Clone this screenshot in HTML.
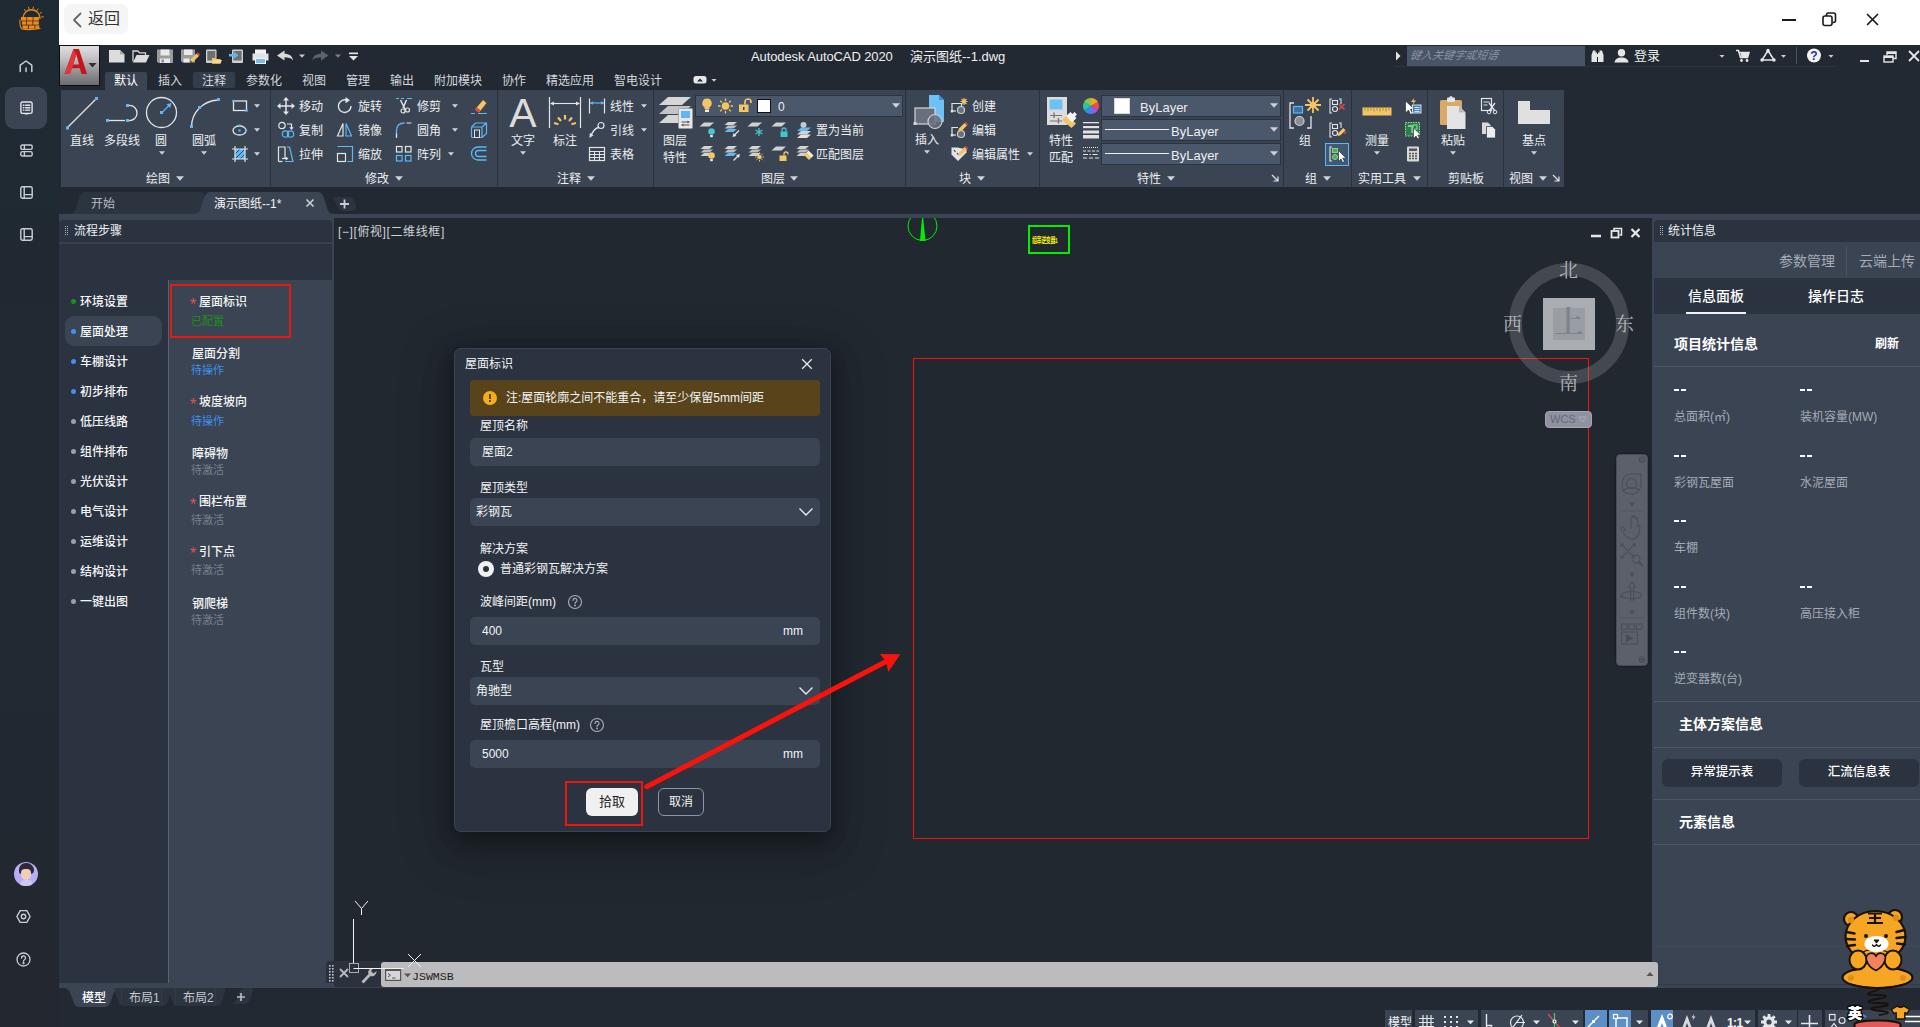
<!DOCTYPE html>
<html lang="zh-CN">
<head>
<meta charset="utf-8">
<title>屋面标识</title>
<style>
*{box-sizing:border-box;margin:0;padding:0}
html,body{width:1920px;height:1027px;overflow:hidden;background:#222933}
body{font-family:"Liberation Sans","Noto Sans CJK SC",sans-serif;font-size:12px;color:#e6e9ee;position:relative}
.a{position:absolute}
.t{position:absolute;white-space:nowrap;line-height:1}
svg{position:absolute;overflow:visible}
.mn{top:75px;font-size:12px;color:#d4d8de}
.rt{font-size:12px;color:#eceef1}
.cb{background:#4b576b;border:1px solid #2c3440}
.fl{font-size:12px;color:#f4f5f7;font-weight:500}
.cmp{font-family:"Liberation Serif","Noto Serif CJK SC",serif}
.dl{font-size:12px;color:#f2f3f5}
.inp{left:470px;width:350px;height:28px;border-radius:5px;background:#3b4453}
.sb{top:1010px;height:17px;background:#3b4453}
/* ---------- main regions ---------- */
#side{left:0;top:0;width:59px;height:1027px;background:linear-gradient(#1f2a33 0%,#212932 40%,#232830 100%)}
#topbar{left:59px;top:0;width:1861px;height:45px;background:#fff}
#acad{left:59px;top:45px;width:1861px;height:982px;background:#222933}
#ribbon{left:61px;top:90px;width:1503px;height:97px;background:#3b4453}
#canvas{left:334px;top:219px;width:1318px;height:768px;background:#212830}
#flow{left:60px;top:220px;width:273px;height:765px;background:#2b3240}
#flowR{left:169px;top:280px;width:164px;height:705px;background:#3b4453;border-left:1px solid #566070}
#stat{left:1654px;top:220px;width:266px;height:765px;background:#3b4453}
</style>
</head>
<body>
<div class="a" id="side"></div>
<div class="a" id="topbar"></div>
<div class="a" id="acad"></div>
<div class="a" id="ribbon"></div>
<!--SIDE-->
<svg style="left:17px;top:6px" width="28" height="26" viewBox="0 0 28 26" fill="none" stroke="#f08a14" stroke-linecap="round">
<path d="M6 12 A8.5 8.5 0 0 1 23 12.5" stroke-width="1.3"/>
<path d="M8.5 5 l-1-1.5 M12 3 l-.4-1.8 M16 2.8 l.4-1.8 M20 4.4 l1-1.5 M23 7.4 l1.5-1 M24.6 11 l1.7-.3" stroke-width="1"/>
<path d="M3 14 q-.5 7 2 9 q8 1.5 18-.5" stroke-width="1.1"/>
<g fill="#f08a14" stroke="none"><rect x="4" y="11" width="5.5" height="3.6"/><rect x="10.2" y="11" width="5.5" height="3.6"/><rect x="16.4" y="11" width="5.5" height="3.6"/>
<rect x="5" y="15.3" width="4" height="3.4"/><rect x="9.8" y="15.3" width="5.6" height="3.4"/><rect x="16.2" y="15.3" width="5.6" height="3.4"/>
<rect x="5.5" y="19.4" width="5.6" height="3.4"/><rect x="11.9" y="19.4" width="5.6" height="3.4"/><rect x="18.3" y="19.4" width="4" height="3.4"/></g>
</svg>
<svg style="left:19px;top:60px" width="14" height="13" viewBox="0 0 14 13" fill="none" stroke="#c9ced6" stroke-width="1.5" stroke-linecap="round" stroke-linejoin="round"><path d="M1.2 11.5V5.2L7 1l5.8 4.2v6.3"/><path d="M7 8v3.5"/></svg>
<div class="a" style="left:5px;top:87px;width:42px;height:42px;border-radius:9px;background:#3b4453"></div>
<svg style="left:20px;top:101px" width="13" height="14" viewBox="0 0 13 14" fill="none" stroke="#e3e6ea" stroke-width="1.4" stroke-linecap="round" stroke-linejoin="round"><rect x=".9" y="1" width="11.2" height="11.4" rx="1.6"/><path d="M3.3 4.3h.6M5.6 4.3h4.2M3.3 6.7h.6M5.6 6.7h4.2M3.3 9.1h.6M5.6 9.1h4.2M5.4 12.9h2.4"/></svg>
<svg style="left:20px;top:144px" width="13" height="13" viewBox="0 0 13 13" fill="none" stroke="#c9ced6" stroke-width="1.4" stroke-linejoin="round"><rect x=".8" y="1" width="11.4" height="4.4" rx="1.6"/><rect x=".8" y="7.6" width="11.4" height="4.4" rx="1.6"/><path d="M4.4 1v4.4M4.4 7.6V12"/></svg>
<svg style="left:20px;top:186px" width="13" height="13" viewBox="0 0 13 13" fill="none" stroke="#c9ced6" stroke-width="1.4" stroke-linejoin="round"><rect x=".8" y=".8" width="11.4" height="11.4" rx="1.6"/><path d="M4.2 .8v11.4M4.2 8.6h8"/></svg>
<svg style="left:20px;top:228px" width="13" height="13" viewBox="0 0 13 13" fill="none" stroke="#c9ced6" stroke-width="1.4" stroke-linejoin="round"><rect x=".8" y=".8" width="11.4" height="11.4" rx="1.6"/><path d="M4.2 .8v11.4M4.2 8.6h8"/></svg>
<div class="a" style="left:14px;top:862px;width:24px;height:24px;border-radius:12px;background:#b6aef6;overflow:hidden">
<div class="a" style="left:5px;top:1px;width:15px;height:11px;border-radius:7px 8px 4px 3px;background:#2b2838"></div>
<div class="a" style="left:7px;top:7px;width:10px;height:11px;border-radius:4px 4px 5px 5px;background:#f1cdbb"></div>
<div class="a" style="left:6px;top:18px;width:13px;height:8px;border-radius:5px 5px 0 0;background:#cfc6f4"></div>
</div>
<svg style="left:16px;top:909px" width="15" height="15" viewBox="0 0 15 15" fill="none" stroke="#c9ced6" stroke-width="1.4" stroke-linejoin="round"><path d="M4.2 1.6h6.6l3.3 5.9-3.3 5.9H4.2L.9 7.500z"/><circle cx="7.500" cy="7.500" r="2.200"/></svg>
<svg style="left:16px;top:952px" width="15" height="15" viewBox="0 0 15 15" fill="none" stroke="#c9ced6" stroke-width="1.3" stroke-linecap="round"><circle cx="7.500" cy="7.500" r="6.500"/><path d="M5.500 6a2 2 0 1 1 3 1.700c-.7.400-1 .8-1 1.600"/><circle cx="7.500" cy="11.200" r=".5" fill="#c9ced6"/></svg>
<!--TOPBAR-->
<div class="a" style="left:64px;top:4px;width:64px;height:30px;border-radius:7px;background:#f5f5f5"></div>
<svg style="left:72px;top:12px" width="10" height="16" viewBox="0 0 10 16" fill="none" stroke="#666" stroke-width="1.8" stroke-linecap="round" stroke-linejoin="round"><path d="M8.500 1.500L2 8l6.500 6.500"/></svg>
<div class="t" style="left:88px;top:11px;font-size:16px;color:#333">返回</div>
<div class="a" style="left:1782px;top:19px;width:14px;height:2px;background:#1a1a1a"></div>
<svg style="left:1822px;top:12px" width="15" height="15" viewBox="0 0 15 15" fill="none" stroke="#1a1a1a" stroke-width="1.6" stroke-linejoin="round"><rect x="1" y="4" width="9" height="9.500" rx="2"/><path d="M4.500 4V3a2 2 0 0 1 2-2h5a2 2 0 0 1 2 2v5.500a2 2 0 0 1-2 2h-1"/></svg>
<svg style="left:1866px;top:13px" width="13" height="13" viewBox="0 0 13 13" fill="none" stroke="#1a1a1a" stroke-width="1.7" stroke-linecap="round"><path d="M1.500 1.500l10 10M11.500 1.500l-10 10"/></svg>
<!--QAT-->
<div class="a" style="left:59px;top:45px;width:41px;height:41px;border:1px solid #0b0d10;background:linear-gradient(#e0e0e2 0%,#c4c4c6 30%,#949496 65%,#6c6c6e 100%)"></div>
<svg style="left:63px;top:48px" width="34" height="34" viewBox="0 0 34 34"><path d="M1.500 26L10.500 1h5.500l8 25h-5.500l-1.700-5.800H8.800L6.900 26z M10.200 16.600h5.800L13.300 6.500z" fill="#c4161c"/><path d="M10.500 1l2.800 5.500-3.100 10.100-3.300 9.400H1.500z" fill="#e0373c"/><path d="M25.500 15h8l-4 4.500z" fill="#2a2f3a"/></svg>
<svg style="left:108px;top:49px" width="260" height="15" viewBox="0 0 260 15">
<!-- new -->
<path d="M1 1h11l4.500 4.500V13.500H1z" fill="#dcdcdc"/><path d="M12 1v4.500h4.500" fill="#a9a9a9"/>
<!-- open -->
<path d="M25 12.500V2h5l1.500 1.800h6V6" fill="none" stroke="#d6d6d6" stroke-width="1.300"/><path d="M25 13.500L28.500 6h13L38 13.500z" fill="#dcdcdc"/>
<!-- save -->
<path d="M49 .5h16v13.500H50.500L49 12.500z" fill="#9b9b9b"/><rect x="52.500" y=".5" width="9" height="6" fill="#e9e9e9"/><rect x="52" y="9.500" width="10" height="4.500" fill="#e9e9e9"/><rect x="53.500" y="10.500" width="2.500" height="3" fill="#8a8a8a"/>
<!-- saveas -->
<path d="M73 .5h14v13H74.500L73 12z" fill="#9b9b9b"/><rect x="76" y=".5" width="8.500" height="5.500" fill="#e9e9e9"/><rect x="75.500" y="9.500" width="6" height="4" fill="#e9e9e9"/><path d="M82 13.500l1-3.500 5.500-5.500 2.500 2.500-5.500 5.500z" fill="#f0c36a"/><path d="M88.500 4.500l1.200-1.200 2.500 2.500-1.200 1.200z" fill="#e0444a"/><path d="M82 13.500l.6-2 1.500 1.500z" fill="#333"/>
<!-- mobile open -->
<rect x="98" y=".5" width="10.500" height="13.500" rx="1" fill="#cfcfcf"/><rect x="99.300" y="2" width="8" height="9.500" fill="#6f6f6f"/><path d="M104 14.500V9h3l1 1h4.500v4.500z" fill="#f3c565"/><path d="M104 14.500l1.500-3.500h8.500l-1.500 3.500z" fill="#f7d98e"/>
<!-- mobile save -->
<rect x="124" y=".5" width="11" height="13.500" rx="1" fill="#cfcfcf"/><rect x="125.300" y="2" width="8.300" height="9.500" fill="#6f6f6f"/><path d="M121 5h5V2.800L130.500 6.300 126 9.800V7.600h-5z" fill="#5db8f5"/>
<!-- print -->
<rect x="147" y=".5" width="11" height="4.500" fill="#f2f2f2"/><path d="M144.500 4.500h16v7h-16z" fill="#e3e3e3"/><rect x="147.500" y="9.500" width="10" height="5" fill="#6ec1f7" stroke="#f2f2f2" stroke-width="1"/>
<!-- undo -->
<path d="M169 6.500L176.500 1.500V4.800c4.500 0 8 2 8.500 6.700-2-2.600-4.500-3.200-8.500-3.200v3.200z" fill="#d9d9d9"/><path d="M191 5.500h6l-3 3.300z" fill="#c8c8c8"/>
<!-- redo -->
<path d="M220.500 6.500L213 1.500V4.800c-4.500 0-8 2-8.500 6.700 2-2.600 4.500-3.200 8.500-3.200v3.200z" fill="#5d6470"/><path d="M227 5.500h6l-3 3.300z" fill="#7b828d"/>
<!-- customize -->
<rect x="241" y="3.500" width="9" height="1.700" fill="#e6e6e6"/><path d="M241 7h9l-4.500 4.500z" fill="#e6e6e6"/>
</svg>
<div class="t" style="left:751px;top:50px;font-size:13px;color:#f0f0f0;letter-spacing:-.1px">Autodesk AutoCAD 2020</div>
<div class="t" style="left:910px;top:50px;font-size:13px;color:#f0f0f0">演示图纸--1.dwg</div>
<svg style="left:1395px;top:51px" width="6" height="10" viewBox="0 0 6 10"><path d="M1 .5l4.500 4.500L1 9.500z" fill="#e6e6e6"/></svg>
<div class="a" style="left:1407px;top:46px;width:178px;height:20px;background:#4a5467"></div>
<div class="t" style="left:1410px;top:50px;font-size:11px;color:#8993a3;font-style:italic;transform:skewX(-10deg);transform-origin:0 50%">键入关键字或短语</div>
<div class="a" style="left:1394px;top:66px;width:443px;height:1px;background:#2c3440"></div>
<svg style="left:1590px;top:48px" width="250" height="16" viewBox="0 0 250 16">
<!-- binoculars -->
<path d="M1.500 14V7l1.500-4.500h2.500v2H7v9.500zM13.500 14V7L12 2.500H9.500v2H8v9.500z" fill="#e6e6e6"/><rect x="6.500" y="6" width="2" height="3" fill="#e6e6e6"/>
<!-- user -->
<circle cx="31.500" cy="4.700" r="3.700" fill="#e6e6e6"/><path d="M24.500 14.500c.5-3.500 3-5 7-5s6.500 1.500 7 5z" fill="#e6e6e6"/>
<!-- arrow -->
<path d="M129.500 7h5l-2.500 2.800z" fill="#d0d0d0"/>
<!-- cart -->
<path d="M146 2.500h2.500l2 7h7l1.500-5h-9.500" fill="none" stroke="#e6e6e6" stroke-width="1.600"/><path d="M150.500 4.500h8.500l-1.500 5h-6z" fill="#e6e6e6"/><circle cx="151.500" cy="12.500" r="1.400" fill="#e6e6e6"/><circle cx="157" cy="12.500" r="1.400" fill="#e6e6e6"/>
<!-- A360 -->
<path d="M172 12l6-9.500 6 9.500z" fill="none" stroke="#e6e6e6" stroke-width="1.500" stroke-linejoin="round"/><circle cx="178" cy="2.500" r="1.700" fill="#e6e6e6"/><circle cx="172" cy="12" r="1.700" fill="#e6e6e6"/><circle cx="184" cy="12" r="1.700" fill="#e6e6e6"/>
<path d="M191 7h5l-2.500 2.800z" fill="#d0d0d0"/>
<rect x="206" y="-1" width="1" height="17" fill="#4a5467"/>
<!-- help -->
<circle cx="224" cy="7.500" r="7" fill="#f2f2f2"/>
<path d="M238.500 7h5l-2.500 2.800z" fill="#d0d0d0"/>
</svg>
<div class="t" style="left:1810px;top:50px;font-size:12px;font-weight:bold;color:#27309a;width:8px;text-align:center">?</div>
<div class="t" style="left:1634px;top:49px;font-size:13px;color:#f0f0f0">登录</div>
<div class="a" style="left:1860px;top:60px;width:9px;height:2px;background:#e6e6e6"></div>
<svg style="left:1883px;top:51px" width="14" height="12" viewBox="0 0 14 12" fill="none" stroke="#e6e6e6" stroke-width="1.400"><path d="M4 4V1h9v6.500h-3"/><path d="M4 2h9" stroke-width="2"/><rect x="1" y="5" width="9" height="6"/><path d="M1 6h9" stroke-width="2"/></svg>
<svg style="left:1908px;top:50px" width="12" height="12" viewBox="0 0 12 12" fill="none" stroke="#e6e6e6" stroke-width="1.800"><path d="M1 1l10 10M11 1L1 11"/></svg>
<!--MENU-->
<div class="a" style="left:105px;top:72px;width:42px;height:18px;background:#3b4453;border-radius:2px 2px 0 0"></div>
<div class="a" style="left:193px;top:72px;width:42px;height:16px;background:#343d4b;border-radius:2px"></div>
<div class="t mn" style="left:114px;color:#fff">默认</div>
<div class="t mn" style="left:158px">插入</div>
<div class="t mn" style="left:202px">注释</div>
<div class="t mn" style="left:246px">参数化</div>
<div class="t mn" style="left:302px">视图</div>
<div class="t mn" style="left:346px">管理</div>
<div class="t mn" style="left:390px">输出</div>
<div class="t mn" style="left:434px">附加模块</div>
<div class="t mn" style="left:502px">协作</div>
<div class="t mn" style="left:546px">精选应用</div>
<div class="t mn" style="left:614px">智电设计</div>
<svg style="left:693px;top:75px" width="26" height="10" viewBox="0 0 26 10"><rect x=".5" y="1" width="13" height="7.500" rx="2.500" fill="#e6e6e6"/><path d="M4 6.500l3-3 3 3z" fill="#222933"/><path d="M18.500 4h5l-2.500 2.800z" fill="#d0d0d0"/></svg>
<!--RIBBON-->
<div class="a" style="left:270px;top:90px;width:1px;height:97px;background:#2a313c"></div>
<div class="a" style="left:497px;top:90px;width:1px;height:97px;background:#2a313c"></div>
<div class="a" style="left:653px;top:90px;width:1px;height:97px;background:#2a313c"></div>
<div class="a" style="left:905px;top:90px;width:1px;height:97px;background:#2a313c"></div>
<div class="a" style="left:1039px;top:90px;width:1px;height:97px;background:#2a313c"></div>
<div class="a" style="left:1283px;top:90px;width:1px;height:97px;background:#2a313c"></div>
<div class="a" style="left:1351px;top:90px;width:1px;height:97px;background:#2a313c"></div>
<div class="a" style="left:1427px;top:90px;width:1px;height:97px;background:#2a313c"></div>
<div class="a" style="left:1503px;top:90px;width:1px;height:97px;background:#2a313c"></div>
<svg style="left:64px;top:95px" width="36" height="36" viewBox="0 0 36 36"><path d="M3 33L32 4" stroke="#e2e4e8" stroke-width="1.300"/><rect x="2.0" y="31.5" width="3" height="3" fill="#5db8f5"/><rect x="31.0" y="2.0" width="3" height="3" fill="#5db8f5"/></svg>
<div class="t rt" style="left:52px;top:135px;width:60px;text-align:center">直线</div>
<svg style="left:104px;top:100px" width="36" height="36" viewBox="0 0 36 36"><path d="M4 20.500h17" stroke="#e2e4e8" stroke-width="1.300" fill="none"/><path d="M24 5.500c12-1.500 12 16.500 0 15" stroke="#e2e4e8" stroke-width="1.300" fill="none"/><rect x="2.0" y="19.0" width="3" height="3" fill="#5db8f5"/><rect x="22.0" y="19.0" width="3" height="3" fill="#5db8f5"/><rect x="22.0" y="4.0" width="3" height="3" fill="#5db8f5"/></svg>
<div class="t rt" style="left:92px;top:135px;width:60px;text-align:center">多段线</div>
<svg style="left:144px;top:95px" width="36" height="36" viewBox="0 0 36 36"><circle cx="17.500" cy="17.500" r="15" fill="none" stroke="#e2e4e8" stroke-width="1.300"/><path d="M18 17.500L26 9.500" stroke="#5db8f5" stroke-width="1.300"/><path d="M27.500 8l-5 1.300 3.700 3.700z" fill="#5db8f5"/><rect x="16.0" y="16.0" width="3" height="3" fill="#5db8f5"/></svg>
<div class="t rt" style="left:131px;top:135px;width:60px;text-align:center">圆</div>
<svg style="left:159px;top:151px" width="6" height="4" viewBox="0 0 6 4"><path d="M0 .3h6L3 3.700z" fill="#cfd3d9"/></svg>
<svg style="left:186px;top:95px" width="38" height="38" viewBox="0 0 38 38"><path d="M5.500 31C6 18 16 6 32 5" stroke="#e2e4e8" stroke-width="1.300" fill="none"/><rect x="4.0" y="30.0" width="3" height="3" fill="#5db8f5"/><rect x="12.0" y="11.0" width="3" height="3" fill="#5db8f5"/><rect x="31.0" y="3.0" width="3" height="3" fill="#5db8f5"/></svg>
<div class="t rt" style="left:174px;top:135px;width:60px;text-align:center">圆弧</div>
<svg style="left:201px;top:151px" width="6" height="4" viewBox="0 0 6 4"><path d="M0 .3h6L3 3.700z" fill="#cfd3d9"/></svg>
<svg style="left:231px;top:98px" width="18" height="16" viewBox="0 0 18 16"><rect x="2.500" y="3" width="13" height="9.500" fill="none" stroke="#e2e4e8" stroke-width="1.300"/><rect x="1.3" y="1.8" width="2.4" height="2.4" fill="#5db8f5"/><rect x="14.3" y="11.3" width="2.4" height="2.4" fill="#5db8f5"/></svg>
<svg style="left:254px;top:104px" width="6" height="4" viewBox="0 0 6 4"><path d="M0 .3h6L3 3.700z" fill="#cfd3d9"/></svg>
<svg style="left:231px;top:122px" width="18" height="16" viewBox="0 0 18 16"><ellipse cx="8.500" cy="8.500" rx="6.500" ry="4.500" fill="none" stroke="#e2e4e8" stroke-width="1.300"/><rect x="7.4" y="7.4" width="2.2" height="2.2" fill="#5db8f5"/><rect x="7.4" y="2.4" width="2.2" height="2.2" fill="#5db8f5"/><rect x="13.9" y="7.4" width="2.2" height="2.2" fill="#5db8f5"/></svg>
<svg style="left:254px;top:128px" width="6" height="4" viewBox="0 0 6 4"><path d="M0 .3h6L3 3.700z" fill="#cfd3d9"/></svg>
<svg style="left:231px;top:145px" width="18" height="18" viewBox="0 0 18 18"><rect x="4" y="4" width="10" height="10" fill="#5db8f5"/><path d="M5 13l8-8M4 9l5-5M9 14l5-5" stroke="#3b4453" stroke-width="1"/><path d="M1 4h16M1 14h16M4 1v16M14 1v16" stroke="#e2e4e8" stroke-width="1.200"/></svg>
<svg style="left:254px;top:152px" width="6" height="4" viewBox="0 0 6 4"><path d="M0 .3h6L3 3.700z" fill="#cfd3d9"/></svg>
<div class="t rt" style="left:128px;top:173px;width:60px;text-align:center">绘图</div>
<svg style="left:176px;top:176px" width="8" height="5" viewBox="0 0 8 5"><path d="M0 .3h8L4 4.700z" fill="#cfd3d9"/></svg>
<svg style="left:277px;top:97px" width="18" height="18" viewBox="0 0 18 18"><path d="M9 1.500v15M1.500 9h15" stroke="#e2e4e8" stroke-width="1.500"/><path d="M9 0l3 3.500H6zM9 18l3-3.500H6zM0 9l3.500-3v6zM18 9l-3.500-3v6z" fill="#e2e4e8"/></svg>
<div class="t rt" style="left:299px;top:101px">移动</div>
<svg style="left:277px;top:121px" width="18" height="18" viewBox="0 0 18 18"><circle cx="5" cy="4.500" r="3.200" fill="none" stroke="#e2e4e8" stroke-width="1.200"/><path d="M10 3h4.500v4" fill="none" stroke="#e2e4e8" stroke-width="1.200"/><path d="M14.500 9l-2.200-2.800h4.400z" fill="#e2e4e8"/><circle cx="8.500" cy="13" r="3.200" fill="none" stroke="#5db8f5" stroke-width="1.200"/><circle cx="13.500" cy="13" r="3.200" fill="none" stroke="#5db8f5" stroke-width="1.200"/></svg>
<div class="t rt" style="left:299px;top:125px">复制</div>
<svg style="left:277px;top:145px" width="18" height="18" viewBox="0 0 18 18"><path d="M1.500 16.500V2h6.500v11" fill="none" stroke="#e2e4e8" stroke-width="1.200"/><path d="M1.500 16.500h4" stroke="#e2e4e8" stroke-width="1.200"/><path d="M10 2h2.500l3.500 14.500H8" fill="none" stroke="#5db8f5" stroke-width="1.200"/><path d="M5 13.500h5" stroke="#e2e4e8" stroke-width="1.200"/><path d="M11.500 13.500l-2.800-2v4z" fill="#e2e4e8"/></svg>
<div class="t rt" style="left:299px;top:149px">拉伸</div>
<svg style="left:336px;top:97px" width="18" height="18" viewBox="0 0 18 18"><path d="M11.500 3.500a6.300 6.300 0 1 0 3.500 5.500" fill="none" stroke="#e2e4e8" stroke-width="1.400"/><path d="M9.500 0l4.500 3.300-4.500 3z" fill="#e2e4e8"/></svg>
<div class="t rt" style="left:358px;top:101px">旋转</div>
<svg style="left:336px;top:121px" width="18" height="18" viewBox="0 0 18 18"><path d="M7 2.500V15H1.500z" fill="none" stroke="#e2e4e8" stroke-width="1.200"/><path d="M10 2.500V15h5.500z" fill="none" stroke="#5db8f5" stroke-width="1.200"/></svg>
<div class="t rt" style="left:358px;top:125px">镜像</div>
<svg style="left:336px;top:145px" width="18" height="18" viewBox="0 0 18 18"><path d="M1.500 1.500h15v15h-5" fill="none" stroke="#5db8f5" stroke-width="1.200"/><rect x="1.500" y="8.500" width="8" height="8" fill="none" stroke="#e2e4e8" stroke-width="1.200"/></svg>
<div class="t rt" style="left:358px;top:149px">缩放</div>
<svg style="left:395px;top:97px" width="18" height="18" viewBox="0 0 18 18"><path d="M1 1.500h3M6 1.500h3M12 1.500h5" stroke="#5db8f5" stroke-width="1.200"/><path d="M5.500 3l5 10M11.500 3l-3.500 8" stroke="#e2e4e8" stroke-width="1.500"/><circle cx="8" cy="14" r="2" fill="none" stroke="#e2e4e8" stroke-width="1.200"/><circle cx="12.500" cy="13" r="2" fill="none" stroke="#e2e4e8" stroke-width="1.200"/></svg>
<div class="t rt" style="left:417px;top:101px">修剪</div>
<svg style="left:452px;top:104px" width="6" height="4" viewBox="0 0 6 4"><path d="M0 .3h6L3 3.700z" fill="#cfd3d9"/></svg>
<svg style="left:395px;top:121px" width="18" height="18" viewBox="0 0 18 18"><path d="M1.500 17V10c0-5 3-8 8-8" fill="none" stroke="#5db8f5" stroke-width="1.300"/><path d="M11.500 2h5M1.500 12.500v4" stroke="#e2e4e8" stroke-width="1.200"/></svg>
<div class="t rt" style="left:417px;top:125px">圆角</div>
<svg style="left:452px;top:128px" width="6" height="4" viewBox="0 0 6 4"><path d="M0 .3h6L3 3.700z" fill="#cfd3d9"/></svg>
<svg style="left:395px;top:145px" width="18" height="18" viewBox="0 0 18 18"><rect x="1.500" y="1.500" width="5.500" height="5.500" fill="none" stroke="#e2e4e8" stroke-width="1.200"/><rect x="10.500" y="1.500" width="5.500" height="5.500" fill="none" stroke="#e2e4e8" stroke-width="1.200"/><rect x="1.500" y="10.500" width="5.500" height="5.500" fill="none" stroke="#5db8f5" stroke-width="1.200"/><rect x="10.500" y="10.500" width="5.500" height="5.500" fill="none" stroke="#5db8f5" stroke-width="1.200"/></svg>
<div class="t rt" style="left:417px;top:149px">阵列</div>
<svg style="left:448px;top:152px" width="6" height="4" viewBox="0 0 6 4"><path d="M0 .3h6L3 3.700z" fill="#cfd3d9"/></svg>
<svg style="left:470px;top:97px" width="18" height="18" viewBox="0 0 18 18"><path d="M5 12.500L13 3l3.500 3L9 15.500z" fill="#f3c565"/><path d="M5 12.500l1.800-2.200 3.700 3-1.500 2.200z" fill="#e0444a"/><path d="M1 16.500h4M8 16.500h9" stroke="#5db8f5" stroke-width="1.200"/></svg>
<svg style="left:470px;top:121px" width="18" height="18" viewBox="0 0 18 18"><rect x="1.500" y="6" width="10.500" height="10.500" rx="1" fill="none" stroke="#5db8f5" stroke-width="1.200"/><path d="M1.500 6l4-4h11v10.500l-4.500 4M12 6l4.500-4" fill="none" stroke="#5db8f5" stroke-width="1.200"/><rect x="4.500" y="9" width="5" height="7.500" fill="none" stroke="#e2e4e8" stroke-width="1"/></svg>
<svg style="left:470px;top:145px" width="18" height="18" viewBox="0 0 18 18"><path d="M16.500 2H8a6.500 6.500 0 0 0 0 13h8.500" fill="none" stroke="#5db8f5" stroke-width="1.300"/><path d="M16.500 5.500H8.500a3 3 0 0 0 0 6h8" fill="none" stroke="#5db8f5" stroke-width="1.300"/></svg>
<div class="t rt" style="left:347px;top:173px;width:60px;text-align:center">修改</div>
<svg style="left:395px;top:176px" width="8" height="5" viewBox="0 0 8 5"><path d="M0 .3h8L4 4.700z" fill="#cfd3d9"/></svg>
<div class="t" style="left:507px;top:93px;font-size:41px;color:#dcdcdc;font-family:'Liberation Sans',sans-serif;width:32px;text-align:center">A</div>
<div class="t rt" style="left:493px;top:135px;width:60px;text-align:center">文字</div>
<svg style="left:520px;top:151px" width="6" height="4" viewBox="0 0 6 4"><path d="M0 .3h6L3 3.700z" fill="#cfd3d9"/></svg>
<svg style="left:547px;top:95px" width="36" height="36" viewBox="0 0 36 36"><path d="M2.500 2v31M33.500 2v31" stroke="#e2e4e8" stroke-width="1.200"/><path d="M4 8.500h28" stroke="#e2e4e8" stroke-width="1.100"/><path d="M3 8.500l4-2v4zM33 8.500l-4-2v4z" fill="#e2e4e8"/><path d="M18 20v4.500M11 22.500l3 3.500M25 22.500l-3 3.500M7 28l4.500 1.200M29 28l-4.500 1.200" stroke="#f3c565" stroke-width="2.200"/></svg>
<div class="t rt" style="left:535px;top:135px;width:60px;text-align:center">标注</div>
<svg style="left:588px;top:97px" width="18" height="18" viewBox="0 0 18 18"><path d="M1.500 1.500v15M16.500 1.500v15" stroke="#e2e4e8" stroke-width="1.200"/><path d="M2 6h14" stroke="#5db8f5" stroke-width="1.200"/><path d="M2 6l3-1.800v3.600zM16 6l-3-1.800v3.600z" fill="#5db8f5"/></svg>
<div class="t rt" style="left:610px;top:101px">线性</div>
<svg style="left:641px;top:104px" width="6" height="4" viewBox="0 0 6 4"><path d="M0 .3h6L3 3.700z" fill="#cfd3d9"/></svg>
<svg style="left:588px;top:121px" width="18" height="18" viewBox="0 0 18 18"><circle cx="13" cy="4.500" r="3" fill="none" stroke="#e2e4e8" stroke-width="1.200"/><path d="M10.500 6.500C7 7 5 10 3 14.500" fill="none" stroke="#e2e4e8" stroke-width="1.300"/><path d="M1.500 17l.3-5 3.700 2.300z" fill="#e2e4e8"/></svg>
<div class="t rt" style="left:610px;top:125px">引线</div>
<svg style="left:641px;top:128px" width="6" height="4" viewBox="0 0 6 4"><path d="M0 .3h6L3 3.700z" fill="#cfd3d9"/></svg>
<svg style="left:588px;top:145px" width="18" height="18" viewBox="0 0 18 18"><rect x="1.500" y="2.500" width="15" height="13" fill="none" stroke="#e2e4e8" stroke-width="1.200"/><path d="M1.500 6.500h15M1.500 9.500h15M1.500 12.500h15M6.500 6.500v9M11.500 6.500v9" stroke="#e2e4e8" stroke-width="1"/></svg>
<div class="t rt" style="left:610px;top:149px">表格</div>
<div class="t rt" style="left:539px;top:173px;width:60px;text-align:center">注释</div>
<svg style="left:587px;top:176px" width="8" height="5" viewBox="0 0 8 5"><path d="M0 .3h8L4 4.700z" fill="#cfd3d9"/></svg>
<svg style="left:658px;top:95px" width="36" height="36" viewBox="0 0 36 36"><path d="M10 2h23l-9 8H1z" fill="#d6d6d6"/><path d="M10 11h23l-9 8H1z" fill="#c4c4c4"/><path d="M10 20h16l-2 8H1z" fill="#d6d6d6"/><rect x="20.500" y="13.500" width="14" height="20" rx="1" fill="#e8e8e8" stroke="#9a9a9a" stroke-width=".8"/><rect x="23" y="16" width="9" height="7" fill="#5db8f5"/><path d="M23.500 27h8M23.500 30h8" stroke="#555" stroke-width="1"/><path d="M31.500 27l-2-1.500v3zM23.500 30l2-1.500v3z" fill="#555"/></svg>
<div class="t rt" style="left:645px;top:135px;width:60px;text-align:center">图层</div>
<div class="t rt" style="left:645px;top:152px;width:60px;text-align:center">特性</div>
<div class="a cb" style="left:695px;top:95px;width:208px;height:22px"></div>
<svg style="left:699px;top:97px" width="80" height="18" viewBox="0 0 80 18"><path d="M8 1.500a4.700 4.700 0 0 1 2.500 8.700V12h-5v-1.800A4.700 4.700 0 0 1 8 1.500z" fill="#f3c565"/><rect x="6" y="12.500" width="4" height="2.500" fill="#eee"/><circle cx="26.500" cy="9" r="3.800" fill="#f3c565"/><path d="M26.500 1.500v2.500M26.500 14v2.500M19 9h2.500M31.500 9H34M21.200 3.700l1.800 1.800M30 12.500l1.800 1.800M21.200 14.300l1.800-1.800M30 5.500l1.800-1.800" stroke="#f3c565" stroke-width="1.300"/><rect x="40" y="7.500" width="9.500" height="7.500" fill="#f3c565"/><path d="M46 7.500V5a3 3 0 0 1 6 0v1" fill="none" stroke="#f3c565" stroke-width="1.700"/><rect x="44" y="10" width="1.500" height="3" fill="#3b4453"/><rect x="58.500" y="2.500" width="13" height="13" fill="#fff" stroke="#111" stroke-width="1"/></svg>
<div class="t rt" style="left:778px;top:101px">0</div>
<svg style="left:892px;top:103px" width="8" height="5" viewBox="0 0 8 5"><path d="M0 .3h8L4 4.700z" fill="#cfd3d9"/></svg>
<svg style="left:699px;top:121px" width="18" height="18" viewBox="0 0 18 18"><path d="M5 1.500h10l-4.500 4h-10z" fill="#d2d2d2"/><circle cx="12.500" cy="10.500" r="3.300" fill="#45c6cf"/><rect x="11.200" y="14" width="2.600" height="2.200" fill="#eee"/></svg>
<svg style="left:723px;top:121px" width="18" height="18" viewBox="0 0 18 18"><path d="M5 1h9l-3.500 3h-9z" fill="#d2d2d2"/><path d="M5 4.500h9l-3.500 3h-9z" fill="#bdbdbd"/><path d="M5 8h9l-3.500 3h-9z" fill="#5db8f5"/><path d="M16 9.500l-5 5" stroke="#e2e4e8" stroke-width="1.200"/><path d="M9.500 16l1-4 3 3z" fill="#e2e4e8"/></svg>
<svg style="left:747px;top:121px" width="18" height="18" viewBox="0 0 18 18"><path d="M5 1.500h10l-4.500 4h-10z" fill="#d2d2d2"/><path d="M12 7v8M8.500 9l7 4M15.500 9l-7 4" stroke="#45c6cf" stroke-width="1.300"/></svg>
<svg style="left:771px;top:121px" width="18" height="18" viewBox="0 0 18 18"><path d="M5 1.500h10l-4.500 4h-10z" fill="#d2d2d2"/><rect x="9.500" y="10.500" width="7" height="5.500" fill="#45c6cf"/><path d="M11 10.500V9a2 2 0 0 1 4 0v1.500" fill="none" stroke="#45c6cf" stroke-width="1.300"/></svg>
<svg style="left:795px;top:121px" width="18" height="18" viewBox="0 0 18 18"><circle cx="8.500" cy="4" r="3" fill="#c9c9c9"/><path d="M6 6.500h10l-4 3.500H2z" fill="#5db8f5"/><path d="M6 10h10l-4 3.500H2z" fill="#d2d2d2"/><path d="M6 13.500h10l-4 3.500H2z" fill="#e2e2e2"/></svg>
<div class="t rt" style="left:816px;top:125px">置为当前</div>
<svg style="left:699px;top:145px" width="18" height="18" viewBox="0 0 18 18"><path d="M5 1h9l-3.500 3h-9z" fill="#d2d2d2"/><path d="M5 4.500h9l-3.500 3h-9z" fill="#bdbdbd"/><path d="M5 8h9l-3.500 3h-9z" fill="#d2d2d2"/><circle cx="12.500" cy="10.500" r="3.300" fill="#f3c565"/><rect x="11.200" y="14" width="2.600" height="2.200" fill="#eee"/></svg>
<svg style="left:723px;top:145px" width="18" height="18" viewBox="0 0 18 18"><path d="M5 1h9l-3.500 3h-9z" fill="#d2d2d2"/><path d="M5 4.500h9l-3.500 3h-9z" fill="#bdbdbd"/><path d="M5 8h9l-3.500 3h-9z" fill="#5db8f5"/><path d="M10.500 15.500l5-5" stroke="#e2e4e8" stroke-width="1.200"/><path d="M17 9l-1 4-3-3z" fill="#e2e4e8"/></svg>
<svg style="left:747px;top:145px" width="18" height="18" viewBox="0 0 18 18"><path d="M5 1h9l-3.500 3h-9z" fill="#d2d2d2"/><path d="M5 4.500h9l-3.500 3h-9z" fill="#bdbdbd"/><path d="M5 8h9l-3.500 3h-9z" fill="#d2d2d2"/><circle cx="12.500" cy="12" r="2.300" fill="#f3c565"/><path d="M12.500 7.500v1.500M12.500 15v1.500M8 12h1.500M15.500 12H17M9.300 8.800l1 1M14.700 14.200l1 1M9.300 15.200l1-1M14.700 9.800l1-1" stroke="#f3c565" stroke-width="1"/></svg>
<svg style="left:771px;top:145px" width="18" height="18" viewBox="0 0 18 18"><path d="M5 1.500h10l-4.500 4h-10z" fill="#d2d2d2"/><rect x="8.500" y="10.500" width="7" height="5.500" fill="#f3c565"/><path d="M13 10.500V9a2 2 0 0 1 4 0v.5" fill="none" stroke="#f3c565" stroke-width="1.300"/></svg>
<svg style="left:795px;top:145px" width="18" height="18" viewBox="0 0 18 18"><path d="M5 1h9l-3.500 3h-9z" fill="#d2d2d2"/><path d="M5 4.500h9l-3.500 3h-9z" fill="#bdbdbd"/><path d="M5 8h9l-3.500 3h-9z" fill="#d2d2d2"/><path d="M9 10l3.500-3.500 5 5L14 15z" fill="#f3c565"/><path d="M11.500 7.500l2-2 5 5-2 2z" fill="#eee"/></svg>
<div class="t rt" style="left:816px;top:149px">匹配图层</div>
<div class="t rt" style="left:743px;top:173px;width:60px;text-align:center">图层</div>
<svg style="left:790px;top:176px" width="8" height="5" viewBox="0 0 8 5"><path d="M0 .3h8L4 4.700z" fill="#cfd3d9"/></svg>
<svg style="left:910px;top:94px" width="36" height="36" viewBox="0 0 36 36"><path d="M19 1h10l5 5v22H19z" fill="#6ec1f7"/><path d="M29 1v5h5z" fill="#3a8fd0"/><rect x="5" y="14" width="20" height="16" fill="#68707f" stroke="#d6d6d6" stroke-width="1.200"/><rect x="3.500" y="28" width="3" height="3" fill="#d6d6d6"/><circle cx="25" cy="27.500" r="7" fill="#68707f" fill-opacity=".85" stroke="#cfcfcf" stroke-width="1.200"/></svg>
<div class="t rt" style="left:897px;top:134px;width:60px;text-align:center">插入</div>
<svg style="left:924px;top:150px" width="6" height="4" viewBox="0 0 6 4"><path d="M0 .3h6L3 3.700z" fill="#cfd3d9"/></svg>
<svg style="left:950px;top:97px" width="18" height="18" viewBox="0 0 18 18"><path d="M2 14V6.500h9.500V9" fill="none" stroke="#e2e4e8" stroke-width="1.200"/><path d="M2 14h4" stroke="#e2e4e8" stroke-width="1.200"/><rect x=".8" y="13" width="2.400" height="2.400" fill="#e2e4e8"/><circle cx="11" cy="13" r="3.500" fill="#68707f" stroke="#cfcfcf" stroke-width="1.200"/><path d="M14 1v7M10.500 4.500h7M11.500 2l5 5M16.500 2l-5 5" stroke="#f3c565" stroke-width="1.200"/></svg>
<div class="t rt" style="left:972px;top:101px">创建</div>
<svg style="left:950px;top:121px" width="18" height="18" viewBox="0 0 18 18"><path d="M2 14V6.500h6" fill="none" stroke="#e2e4e8" stroke-width="1.200"/><path d="M2 14h4" stroke="#e2e4e8" stroke-width="1.200"/><rect x=".8" y="13" width="2.400" height="2.400" fill="#e2e4e8"/><circle cx="11" cy="13" r="3.500" fill="#68707f" stroke="#cfcfcf" stroke-width="1.200"/><path d="M8 11l1-3.500 5.500-5.500 2.500 2.500L11.500 10z" fill="#f3c565"/><path d="M14.500 2l1.200-1.200 2.500 2.500L17 4.500z" fill="#e0444a"/></svg>
<div class="t rt" style="left:972px;top:125px">编辑</div>
<svg style="left:950px;top:145px" width="18" height="18" viewBox="0 0 18 18"><path d="M1.500 2.500h6l9 2v3L8 16 1.500 9.500z" fill="#e2e4e8"/><path d="M4 5l1.500 2M7 8l1.500 2" stroke="#3b4453" stroke-width="1.200"/><path d="M8 11l1-3.500 5.500-5.500 2.500 2.500L11.500 10z" fill="#f3c565"/><path d="M14.500 2l1.200-1.200 2.500 2.500L17 4.500z" fill="#e0444a"/></svg>
<div class="t rt" style="left:972px;top:149px">编辑属性</div>
<svg style="left:1027px;top:152px" width="6" height="4" viewBox="0 0 6 4"><path d="M0 .3h6L3 3.700z" fill="#cfd3d9"/></svg>
<div class="t rt" style="left:935px;top:173px;width:60px;text-align:center">块</div>
<svg style="left:977px;top:176px" width="8" height="5" viewBox="0 0 8 5"><path d="M0 .3h8L4 4.700z" fill="#cfd3d9"/></svg>
<svg style="left:1045px;top:95px" width="36" height="36" viewBox="0 0 36 36"><rect x="2" y="2" width="20" height="28" fill="#dcdcdc"/><rect x="4.500" y="4.500" width="13" height="10" fill="#6ec1f7"/><path d="M5 20.500h12M5 26h12" stroke="#777" stroke-width="1"/><path d="M9 17.500v5.500M13.500 23v5.500" stroke="#777" stroke-width="1.400"/><path d="M17 25l5-5 9 8.500-4.500 4.500z" fill="#f3c565"/><path d="M21 21l4.500-4 2 2 2-2 2.500 2.500-2 2 1.500 1.500-4.500 4.500z" fill="#f4f4f4"/></svg>
<div class="t rt" style="left:1031px;top:135px;width:60px;text-align:center">特性</div>
<div class="t rt" style="left:1031px;top:152px;width:60px;text-align:center">匹配</div>
<svg style="left:1083px;top:98px" width="16" height="16" viewBox="0 0 16 16"><path d="M8 8L8 0A8 8 0 0 1 14.900 4z" fill="#f5a623"/><path d="M8 8L14.900 4A8 8 0 0 1 14.900 12z" fill="#ee4d4d"/><path d="M8 8L14.900 12A8 8 0 0 1 8 16z" fill="#8d5cf0"/><path d="M8 8L8 16A8 8 0 0 1 1.100 12z" fill="#2f8fe8"/><path d="M8 8L1.100 12A8 8 0 0 1 1.100 4z" fill="#2ec4a0"/><path d="M8 8L1.100 4A8 8 0 0 1 8 0z" fill="#7ccf4c"/></svg>
<svg style="left:1083px;top:121px" width="16" height="18" viewBox="0 0 16 18"><rect x="0" y="1" width="16" height="1.300" fill="#e2e2e2"/><rect x="0" y="5" width="16" height="2.200" fill="#e2e2e2"/><rect x="0" y="9.500" width="16" height="3" fill="#e2e2e2"/><rect x="0" y="14" width="16" height="3.500" fill="#e2e2e2"/></svg>
<svg style="left:1083px;top:146px" width="16" height="16" viewBox="0 0 16 16"><path d="M0 1.500h16" stroke="#e2e2e2" stroke-width="1" stroke-dasharray="1 1"/><path d="M0 5h16" stroke="#e2e2e2" stroke-width="1.200" stroke-dasharray="3 1.500"/><path d="M0 8.500h16" stroke="#e2e2e2" stroke-width="1.200" stroke-dasharray="5 1.500 1.500 1.500"/><path d="M0 12h16" stroke="#e2e2e2" stroke-width="1.200" stroke-dasharray="4 2"/></svg>
<div class="a cb" style="left:1101px;top:95px;width:180px;height:22px"></div>
<svg style="left:1270px;top:103px" width="8" height="5" viewBox="0 0 8 5"><path d="M0 .3h8L4 4.700z" fill="#cfd3d9"/></svg>
<div class="a" style="left:1114px;top:98px;width:16px;height:16px;background:#fff;border:1px solid #d9d9d9"></div>
<div class="t rt" style="left:1140px;top:101px;font-size:13px">ByLayer</div>
<div class="a cb" style="left:1101px;top:119px;width:180px;height:22px"></div>
<svg style="left:1270px;top:127px" width="8" height="5" viewBox="0 0 8 5"><path d="M0 .3h8L4 4.700z" fill="#cfd3d9"/></svg>
<div class="a" style="left:1105px;top:129px;width:64px;height:1px;background:#f0f0f0"></div>
<div class="t rt" style="left:1171px;top:125px;font-size:13px">ByLayer</div>
<div class="a cb" style="left:1101px;top:143px;width:180px;height:22px"></div>
<svg style="left:1270px;top:151px" width="8" height="5" viewBox="0 0 8 5"><path d="M0 .3h8L4 4.700z" fill="#cfd3d9"/></svg>
<div class="a" style="left:1105px;top:153px;width:64px;height:1px;background:#f0f0f0"></div>
<div class="t rt" style="left:1171px;top:149px;font-size:13px">ByLayer</div>
<div class="t rt" style="left:1119px;top:173px;width:60px;text-align:center">特性</div>
<svg style="left:1167px;top:176px" width="8" height="5" viewBox="0 0 8 5"><path d="M0 .3h8L4 4.700z" fill="#cfd3d9"/></svg>
<svg style="left:1271px;top:174px" width="8" height="8" viewBox="0 0 8 8"><path d="M1 1l5.500 5.500M7 2.500V7H2.500" fill="none" stroke="#e2e4e8" stroke-width="1.200"/></svg>
<svg style="left:1287px;top:95px" width="36" height="36" viewBox="0 0 36 36"><path d="M7 8H3v25h4M20 33h4v-12" fill="none" stroke="#e2e4e8" stroke-width="1.300"/><rect x="6.500" y="11.500" width="9" height="6.500" fill="#3f6ea3" stroke="#5db8f5" stroke-width="1.200"/><circle cx="12.500" cy="26" r="4.500" fill="#8b8f97" stroke="#cfcfcf" stroke-width="1.200"/><path d="M26 2v16M18 10h16M20.500 4.500l11 11M31.500 4.500l-11 11" stroke="#f3c565" stroke-width="1.800"/><circle cx="26" cy="10" r="3" fill="#f3c565"/></svg>
<div class="t rt" style="left:1275px;top:135px;width:60px;text-align:center">组</div>
<svg style="left:1328px;top:97px" width="18" height="18" viewBox="0 0 18 18"><path d="M4 2H2v14h2" fill="none" stroke="#e2e4e8" stroke-width="1.100"/><path d="M11 2h2v5" fill="none" stroke="#e2e4e8" stroke-width="1.100"/><rect x="4.500" y="3.500" width="5" height="4" fill="none" stroke="#e2e4e8" stroke-width="1.100"/><circle cx="7" cy="12" r="2.500" fill="none" stroke="#e2e4e8" stroke-width="1.100"/><path d="M11 7l5.500 5.500M16.500 7L11 12.500" stroke="#e0444a" stroke-width="1.600"/></svg>
<svg style="left:1328px;top:121px" width="18" height="18" viewBox="0 0 18 18"><path d="M4 2H2v14h2" fill="none" stroke="#e2e4e8" stroke-width="1.100"/><path d="M11 2h2v5" fill="none" stroke="#e2e4e8" stroke-width="1.100"/><rect x="4.500" y="3.500" width="5" height="4" fill="none" stroke="#e2e4e8" stroke-width="1.100"/><circle cx="7" cy="12" r="2.500" fill="none" stroke="#e2e4e8" stroke-width="1.100"/><path d="M9.500 15l.8-3 5-5 2.200 2.200-5 5z" fill="#f3c565"/><path d="M15.500 12.200l2-2 1 1-2 2z" fill="#e0444a"/></svg>
<div class="a" style="left:1325px;top:143px;width:24px;height:23px;border:1px solid #5db8f5;background:#405874"></div>
<svg style="left:1328px;top:145px" width="18" height="18" viewBox="0 0 18 18"><path d="M4 2H2v14h2" fill="none" stroke="#e2e4e8" stroke-width="1.100"/><rect x="4.500" y="3.500" width="5" height="4" fill="#4caf50" stroke="#9be29e" stroke-width=".8"/><circle cx="7" cy="12" r="2.500" fill="#4caf50" stroke="#9be29e" stroke-width=".8"/><path d="M10.500 5.500v11l2.500-2.500 1.800 3.500 1.700-.9-1.800-3.400h3.300z" fill="#fff" stroke="#222" stroke-width=".6"/></svg>
<div class="t rt" style="left:1301px;top:173px;width:20px;text-align:center">组</div>
<svg style="left:1323px;top:176px" width="8" height="5" viewBox="0 0 8 5"><path d="M0 .3h8L4 4.700z" fill="#cfd3d9"/></svg>
<svg style="left:1362px;top:107px" width="30" height="10" viewBox="0 0 30 10"><rect x=".5" y=".5" width="29" height="8" fill="#f3c565"/><path d="M3 .5v3M6 .5v4M9 .5v3M12 .5v4M15 .5v3M18 .5v4M21 .5v3M24 .5v4M27 .5v3" stroke="#b38a2e" stroke-width="1"/></svg>
<div class="t rt" style="left:1347px;top:135px;width:60px;text-align:center">测量</div>
<svg style="left:1374px;top:151px" width="6" height="4" viewBox="0 0 6 4"><path d="M0 .3h6L3 3.700z" fill="#cfd3d9"/></svg>
<svg style="left:1404px;top:97px" width="18" height="18" viewBox="0 0 18 18"><path d="M1.500 4v12l3-3 2 4.500 2-1-2-4.300h4z" fill="#fff" stroke="#222" stroke-width=".6"/><rect x="8.500" y="8" width="8.500" height="8" fill="#3f7fc4" stroke="#fff" stroke-width=".8"/><path d="M10.500 10.500h5M10.500 12.500h5M10.500 14.500h5" stroke="#fff" stroke-width=".8"/><path d="M10 1l-3 4h2.500l-1 3 3.500-4.500h-2.500z" fill="#f3c565"/></svg>
<svg style="left:1404px;top:121px" width="18" height="18" viewBox="0 0 18 18"><rect x="1.500" y="1.500" width="14" height="13.500" fill="#2e7d4a" stroke="#8fe3a0" stroke-width="1" stroke-dasharray="1.500 1"/><path d="M4 5h4v6h6" fill="none" stroke="#8fe3a0" stroke-width="1.300"/><rect x="9" y="4" width="4" height="4" fill="none" stroke="#8fe3a0" stroke-width="1"/><path d="M9.500 7v10.500l2.500-2.500 1.800 3 1.700-.9-1.800-3h3.300z" fill="#fff" stroke="#222" stroke-width=".6"/></svg>
<svg style="left:1404px;top:145px" width="18" height="18" viewBox="0 0 18 18"><rect x="3" y="1.500" width="12" height="15" rx="1" fill="#d9d9d9"/><rect x="5" y="3.500" width="8" height="2.500" fill="#555"/><path d="M5 8.500h2M8 8.500h2M11 8.500h2M5 11h2M8 11h2M11 11h2M5 13.500h2M8 13.500h2M11 13.500h2" stroke="#555" stroke-width="1.500"/></svg>
<div class="t rt" style="left:1352px;top:173px;width:60px;text-align:center">实用工具</div>
<svg style="left:1413px;top:176px" width="8" height="5" viewBox="0 0 8 5"><path d="M0 .3h8L4 4.700z" fill="#cfd3d9"/></svg>
<svg style="left:1438px;top:95px" width="30" height="36" viewBox="0 0 30 36"><rect x="2" y="5" width="22" height="25" rx="1.500" fill="#d8a968"/><rect x="9" y="2.500" width="8" height="4.500" rx="1" fill="#e6e6e6"/><circle cx="13" cy="2.500" r="1.500" fill="#e6e6e6"/><path d="M9 11h12l6.500 6.500V34H9z" fill="#e4e4e4"/><path d="M21 11v6.500h6.500z" fill="#b9b9b9"/></svg>
<div class="t rt" style="left:1423px;top:135px;width:60px;text-align:center">粘贴</div>
<svg style="left:1450px;top:151px" width="6" height="4" viewBox="0 0 6 4"><path d="M0 .3h6L3 3.700z" fill="#cfd3d9"/></svg>
<svg style="left:1480px;top:97px" width="18" height="18" viewBox="0 0 18 18"><rect x="1.500" y="1.500" width="10" height="12" fill="none" stroke="#e2e4e8" stroke-width="1.200"/><path d="M3.500 5h6M3.500 8h4" stroke="#e2e4e8" stroke-width="1.200"/><path d="M9 6l6 8M15 6l-6 8" stroke="#e2e4e8" stroke-width="1.300"/><circle cx="9" cy="15" r="1.800" fill="none" stroke="#e2e4e8" stroke-width="1"/><circle cx="15" cy="15" r="1.800" fill="none" stroke="#e2e4e8" stroke-width="1"/></svg>
<svg style="left:1480px;top:121px" width="18" height="18" viewBox="0 0 18 18"><path d="M2 1.500h6l3 3V13H2z" fill="#d9d9d9"/><path d="M6.500 5.500h6l3 3V17h-9z" fill="#ededed" stroke="#3b4453" stroke-width=".8"/></svg>
<div class="t rt" style="left:1436px;top:173px;width:60px;text-align:center">剪贴板</div>
<svg style="left:1517px;top:100px" width="34" height="26" viewBox="0 0 34 26"><path d="M1 1h12v9h20v14H1z" fill="#e0e0e0"/></svg>
<div class="t rt" style="left:1504px;top:135px;width:60px;text-align:center">基点</div>
<svg style="left:1531px;top:151px" width="6" height="4" viewBox="0 0 6 4"><path d="M0 .3h6L3 3.700z" fill="#cfd3d9"/></svg>
<div class="t rt" style="left:1506px;top:173px;width:30px;text-align:center">视图</div>
<svg style="left:1539px;top:176px" width="8" height="5" viewBox="0 0 8 5"><path d="M0 .3h8L4 4.700z" fill="#cfd3d9"/></svg>
<svg style="left:1552px;top:174px" width="8" height="8" viewBox="0 0 8 8"><path d="M1 1l5.500 5.500M7 2.500V7H2.500" fill="none" stroke="#e2e4e8" stroke-width="1.200"/></svg>
<!--FILETABS-->
<div class="a" style="left:59px;top:214px;width:1861px;height:5px;background:#3b4453"></div>
<div class="a" style="left:59px;top:214px;width:275px;height:773px;background:#3b4453"></div>
<svg style="left:59px;top:187px" width="320" height="28" viewBox="0 0 320 28">
<path d="M8 27c8 0 8-3 10-10l2.500-7c1.500-4 3-5 7-5h112c4 0 5.500 1 7 5l2.500 7c2 7 2 10 10 10z" fill="#2c3440"/>
<path d="M133 27c8 0 8-3 10-10l2.500-7c1.500-4 3-5 7-5h105c4 0 5.500 1 7 5l2.500 7c2 7 2 10 10 10z" fill="#3b4453"/>
<path d="M274 10h16c3 0 4.500 1.500 5.500 4.500l1.500 5c.6 2.500-.5 4.500-3 4.500h-9c-4 0-5.500-1.500-7-5z" fill="#2c3440"/>
<path d="M285.500 12.500v9M281 17h9" stroke="#c8ccd2" stroke-width="1.800"/>
<path d="M247.500 12.500l7 7M254.500 12.500l-7 7" stroke="#c8ccd2" stroke-width="1.700"/>
</svg>
<div class="t" style="left:91px;top:198px;font-size:12px;color:#b6bcc5">开始</div>
<div class="t" style="left:214px;top:198px;font-size:12px;color:#f2f3f5">演示图纸--1*</div>
<!--FLOW-->
<div class="a" style="left:59px;top:220px;width:273px;height:764px;background:#2b3240;border-radius:4px 4px 0 0"></div>
<div class="a" style="left:59px;top:242px;width:273px;height:2px;background:#39414f"></div>
<div class="a" style="left:168px;top:280px;width:164px;height:704px;background:#3b4453;border-left:1px solid #586272"></div>
<svg style="left:65px;top:226px" width="4" height="10" viewBox="0 0 4 10" fill="#aab0ba"><rect x="0" y="0" width="1" height="1"/><rect x="2" y="0" width="1" height="1"/><rect x="0" y="2" width="1" height="1"/><rect x="2" y="2" width="1" height="1"/><rect x="0" y="4" width="1" height="1"/><rect x="2" y="4" width="1" height="1"/><rect x="0" y="6" width="1" height="1"/><rect x="2" y="6" width="1" height="1"/><rect x="0" y="8" width="1" height="1"/><rect x="2" y="8" width="1" height="1"/></svg>
<div class="t" style="left:74px;top:225px;font-size:12px;color:#eef0f3">流程步骤</div>
<div class="a" style="left:65px;top:316px;width:97px;height:30px;border-radius:9px;background:#3b4453"></div>
<div class="a" style="left:71px;top:299.0px;width:5px;height:5px;border-radius:3px;background:#1d8f1d"></div>
<div class="t fl" style="left:80px;top:296.0px">环境设置</div>
<div class="a" style="left:71px;top:329.0px;width:5px;height:5px;border-radius:3px;background:#3f90f0"></div>
<div class="t fl" style="left:80px;top:326.0px">屋面处理</div>
<div class="a" style="left:71px;top:359.0px;width:5px;height:5px;border-radius:3px;background:#3f90f0"></div>
<div class="t fl" style="left:80px;top:356.0px">车棚设计</div>
<div class="a" style="left:71px;top:389.0px;width:5px;height:5px;border-radius:3px;background:#3f90f0"></div>
<div class="t fl" style="left:80px;top:386.0px">初步排布</div>
<div class="a" style="left:71px;top:419.0px;width:5px;height:5px;border-radius:3px;background:#9aa0a9"></div>
<div class="t fl" style="left:80px;top:416.0px">低压线路</div>
<div class="a" style="left:71px;top:449.0px;width:5px;height:5px;border-radius:3px;background:#9aa0a9"></div>
<div class="t fl" style="left:80px;top:446.0px">组件排布</div>
<div class="a" style="left:71px;top:479.0px;width:5px;height:5px;border-radius:3px;background:#9aa0a9"></div>
<div class="t fl" style="left:80px;top:476.0px">光伏设计</div>
<div class="a" style="left:71px;top:509.0px;width:5px;height:5px;border-radius:3px;background:#9aa0a9"></div>
<div class="t fl" style="left:80px;top:506.0px">电气设计</div>
<div class="a" style="left:71px;top:539.0px;width:5px;height:5px;border-radius:3px;background:#9aa0a9"></div>
<div class="t fl" style="left:80px;top:536.0px">运维设计</div>
<div class="a" style="left:71px;top:569.0px;width:5px;height:5px;border-radius:3px;background:#9aa0a9"></div>
<div class="t fl" style="left:80px;top:566.0px">结构设计</div>
<div class="a" style="left:71px;top:599.0px;width:5px;height:5px;border-radius:3px;background:#9aa0a9"></div>
<div class="t fl" style="left:80px;top:596.0px">一键出图</div>
<div class="a" style="left:170px;top:284px;width:121px;height:54px;border:2px solid #e8190f"></div>
<div class="t" style="left:190px;top:296.5px;font-size:16px;color:#e05252">*</div>
<div class="t fl" style="left:199px;top:296.0px">屋面标识</div>
<div class="t" style="left:191px;top:315.8px;font-size:11px;color:#1d8f1d">已配置</div>
<div class="t fl" style="left:192px;top:347.5px">屋面分割</div>
<div class="t" style="left:191px;top:365.0px;font-size:11px;color:#3f90f0">待操作</div>
<div class="t" style="left:190px;top:396.5px;font-size:16px;color:#e05252">*</div>
<div class="t fl" style="left:199px;top:396.0px">坡度坡向</div>
<div class="t" style="left:191px;top:416.0px;font-size:11px;color:#3f90f0">待操作</div>
<div class="t fl" style="left:192px;top:448.0px">障碍物</div>
<div class="t" style="left:191px;top:464.8px;font-size:11px;color:#79818f">待激活</div>
<div class="t" style="left:190px;top:496.5px;font-size:16px;color:#e05252">*</div>
<div class="t fl" style="left:199px;top:496.0px">围栏布置</div>
<div class="t" style="left:191px;top:515.3px;font-size:11px;color:#79818f">待激活</div>
<div class="t" style="left:190px;top:546.2px;font-size:16px;color:#e05252">*</div>
<div class="t fl" style="left:199px;top:545.7px">引下点</div>
<div class="t" style="left:191px;top:565.4px;font-size:11px;color:#79818f">待激活</div>
<div class="t fl" style="left:192px;top:597.5px">钢爬梯</div>
<div class="t" style="left:191px;top:614.7px;font-size:11px;color:#79818f">待激活</div>
<!--CANVAS-->
<div class="a" style="left:334px;top:218px;width:1318px;height:770px;background:#212830"></div>
<div class="t" style="left:338px;top:226px;font-size:12px;color:#cfd2d7;letter-spacing:.6px">[−][俯视][二维线框]</div>
<svg style="left:900px;top:218px" width="180" height="40" viewBox="0 0 180 40">
<defs><clipPath id="cpg"><rect x="0" y="0" width="180" height="40"/></clipPath></defs>
<g clip-path="url(#cpg)"><circle cx="22.500" cy="8" r="14.500" fill="none" stroke="#00ee00" stroke-width="1"/><path d="M22 0h1.200l2.300 23h-5.500z" fill="#00ee00"/></g>
<rect x="129" y="8" width="40" height="27" fill="none" stroke="#00f000" stroke-width="2"/>
</svg>
<div class="t" style="left:1032px;top:237px;font-size:12px;font-weight:700;color:#fbf400;transform:scale(.42,.62);transform-origin:0 0;letter-spacing:-1px">组串逆变器1</div>
<svg style="left:1588px;top:226px" width="56" height="14" viewBox="0 0 56 14" fill="none" stroke="#e8e8e8"><path d="M3 10h10" stroke-width="2.500"/><rect x="23.500" y="5" width="7" height="6.500" stroke-width="1.800"/><path d="M26 4.500V2.500h7.500v6.500h-2" stroke-width="1.500"/><path d="M43.500 3l8 8M51.500 3l-8 8" stroke-width="2.200"/></svg>
<!-- red rectangle & arrow -->
<div class="a" style="left:913px;top:358px;width:676px;height:481px;border:1px solid #fa0f0a"></div>
<!-- compass -->
<div class="a" style="left:1509px;top:263px;width:120px;height:121px;border-radius:60px;border:13px solid rgba(150,152,160,.30)"></div>
<div class="a" style="left:1543px;top:298px;width:52px;height:52px;background:#aaadb2"></div>
<div class="a" style="left:1553px;top:308px;width:32px;height:32px;background:#999da4"></div>
<div class="t cmp" style="left:1553px;top:307px;width:32px;text-align:center;font-size:30px;color:#7e828a;font-weight:600">上</div>
<div class="t cmp" style="left:1559px;top:261px;font-size:19px;color:#b4b6ba">北</div>
<div class="t cmp" style="left:1559px;top:374px;font-size:19px;color:#b4b6ba">南</div>
<div class="t cmp" style="left:1503px;top:315px;font-size:19px;color:#b4b6ba">西</div>
<div class="t cmp" style="left:1615px;top:315px;font-size:19px;color:#b4b6ba">东</div>
<div class="a" style="left:1545px;top:411px;width:47px;height:17px;border-radius:4px;background:#8f92a0;border:1px solid #a3a6b2"></div>
<div class="t" style="left:1550px;top:414px;font-size:11px;color:#666a75">WCS</div>
<svg style="left:1578px;top:416px" width="9" height="7" viewBox="0 0 9 7"><path d="M.8 1h7.400L4.500 6z" fill="none" stroke="#a9acb8" stroke-width="1"/></svg>
<!-- nav bar -->
<div class="a" style="left:1616px;top:454px;width:32px;height:212px;border-radius:4px;background:#5b606a;border:1px solid #474c55;box-shadow:0 0 3px rgba(0,0,0,.5)"></div>
<svg style="left:1617px;top:455px" width="30" height="210" viewBox="0 0 30 210" fill="none" stroke="#4a4f58" stroke-width="1.100">
<circle cx="25" cy="4.500" r="2.800"/><path d="M23.200 2.700l3.600 3.600M26.800 2.700l-3.600 3.600" stroke-width=".8"/>
<path d="M5 30c0-7 4-11 10-11h9v9c0 7-4 11-10 11s-9-3-9-8z"/><circle cx="14.500" cy="28.500" r="5"/><path d="M7 35c3-3 12-3 15 0"/>
<path d="M13 48h4l-2 2.500z" fill="#474c55"/><path d="M2 56h26" stroke="#535862"/>
<path d="M9 76c-2-3-4-5-5-4s1 4 4 8c2 3 4 4 7 4s6-2 7-6l1-6c.3-2-1.500-2-2 0l-.5-8c0-2-2-2-2 0l-.5-2c0-2-2-2-2 0v1c0-2-2-2-2 0v11"/>
<path d="M4 89l14 14M18 89L4 103M4 92v-3h3M18 92v-3h-3M4 100v3h3"/><circle cx="19" cy="104" r="4"/><path d="M22 107l4 4" stroke-width="2"/>
<path d="M13 118h4l-2 2.500z" fill="#474c55"/>
<path d="M15 127l-3.500 5h2v13h3v-13h2z"/><ellipse cx="14.500" cy="140" rx="10" ry="3.500"/><path d="M6 143l-2.500 -1 1-2.500" />
<path d="M13 156h4l-2 2.500z" fill="#474c55"/><path d="M2 163h26" stroke="#535862"/>
<rect x="4.500" y="169" width="5.500" height="5.500"/><rect x="12" y="169" width="5.500" height="5.500"/><rect x="19.500" y="169" width="5.500" height="5.500"/><rect x="4.500" y="177" width="16" height="12"/><path d="M9.500 180v6.500l6-3.200z" fill="#474c55"/>
<circle cx="25" cy="204.500" r="2.800"/><path d="M23.500 204h3l-1.500 1.800z" fill="#474c55"/>
</svg>
<!--DIALOG-->
<div class="a" style="left:454px;top:348px;width:377px;height:484px;border-radius:7px;background:#2b3240;border:1px solid #3c4451;box-shadow:0 6px 16px 0 rgba(0,0,0,.22),0 9px 28px 4px rgba(0,0,0,.18),0 12px 48px 16px rgba(0,0,0,.12)"></div>
<div class="t" style="left:465px;top:358px;font-size:12px;color:#f2f3f5">屋面标识</div>
<svg style="left:801px;top:358px" width="12" height="12" viewBox="0 0 12 12"><path d="M1.200 1.200l9.600 9.600M10.800 1.200l-9.600 9.600" stroke="#e8eaed" stroke-width="1.300"/></svg>
<div class="a" style="left:470px;top:380px;width:350px;height:36px;border-radius:4px;background:#58431b"></div>
<div class="a" style="left:483px;top:391px;width:14px;height:14px;border-radius:7px;background:#f5ae14"></div>
<div class="a" style="left:489px;top:394px;width:2px;height:5px;background:#58431b"></div>
<div class="a" style="left:489px;top:400px;width:2px;height:2px;background:#58431b"></div>
<div class="t dl" style="left:506px;top:392px">注:屋面轮廓之间不能重合，请至少保留5mm间距</div>
<div class="t dl" style="left:480px;top:420px">屋顶名称</div>
<div class="a inp" style="top:438px"></div>
<div class="t dl" style="left:482px;top:446px">屋面2</div>
<div class="t dl" style="left:480px;top:482px">屋顶类型</div>
<div class="a inp" style="top:498px"></div>
<div class="t dl" style="left:476px;top:506px">彩钢瓦</div>
<svg style="left:798px;top:507px" width="16" height="10" viewBox="0 0 16 10"><path d="M1.500 1.500L8 8l6.500-6.500" fill="none" stroke="#e8eaed" stroke-width="1.400"/></svg>
<div class="t dl" style="left:480px;top:543px">解决方案</div>
<div class="a" style="left:478px;top:561px;width:16px;height:16px;border-radius:8px;background:#f0f0f0"></div>
<div class="a" style="left:483px;top:566px;width:6px;height:6px;border-radius:3px;background:#2b3240"></div>
<div class="t dl" style="left:500px;top:563px">普通彩钢瓦解决方案</div>
<div class="t dl" style="left:480px;top:596px">波峰间距(mm)</div>
<svg style="left:567px;top:594px" width="16" height="16" viewBox="0 0 16 16" fill="none" stroke="#aab0ba" stroke-width="1.100" stroke-linecap="round"><circle cx="8" cy="8" r="6.500"/><path d="M6 6.400a2 2 0 1 1 3 1.700c-.7.400-1 .8-1 1.500"/><circle cx="8" cy="11.400" r=".4" fill="#aab0ba"/></svg>
<div class="a inp" style="top:617px"></div>
<div class="t dl" style="left:482px;top:625px">400</div>
<div class="t dl" style="left:783px;top:625px">mm</div>
<div class="t dl" style="left:480px;top:661px">瓦型</div>
<div class="a inp" style="top:677px"></div>
<div class="t dl" style="left:476px;top:685px">角驰型</div>
<svg style="left:798px;top:686px" width="16" height="10" viewBox="0 0 16 10"><path d="M1.500 1.500L8 8l6.500-6.500" fill="none" stroke="#e8eaed" stroke-width="1.400"/></svg>
<div class="t dl" style="left:480px;top:719px">屋顶檐口高程(mm)</div>
<svg style="left:589px;top:717px" width="16" height="16" viewBox="0 0 16 16" fill="none" stroke="#aab0ba" stroke-width="1.100" stroke-linecap="round"><circle cx="8" cy="8" r="6.500"/><path d="M6 6.400a2 2 0 1 1 3 1.700c-.7.400-1 .8-1 1.500"/><circle cx="8" cy="11.400" r=".4" fill="#aab0ba"/></svg>
<div class="a inp" style="top:740px"></div>
<div class="t dl" style="left:482px;top:748px">5000</div>
<div class="t dl" style="left:783px;top:748px">mm</div>
<div class="a" style="left:565px;top:781px;width:78px;height:45px;border:2px solid #f0140e"></div>
<div class="a" style="left:586px;top:788px;width:52px;height:28px;border-radius:6px;background:#f0f0f0"></div>
<div class="t" style="left:586px;top:795px;width:52px;text-align:center;font-size:13px;color:#1f1f1f">拾取</div>
<div class="a" style="left:658px;top:788px;width:46px;height:28px;border-radius:6px;border:1px solid #8f96a2"></div>
<div class="t" style="left:658px;top:796px;width:46px;text-align:center;font-size:12px;color:#f2f3f5">取消</div>
<svg style="left:620px;top:640px" width="300" height="160" viewBox="0 0 300 160"><path d="M26.700 146.700L268 20.500" stroke="#fa130b" stroke-width="5" stroke-linecap="round"/><path d="M280.300 14.300l-20.500-.3 6.200 7.500 2.300 10.500z" fill="#fa130b"/></svg>
<!--STAT-->
<div class="a" style="left:1652px;top:218px;width:268px;height:770px;background:#3b4453"></div>
<div class="a" style="left:1654px;top:220px;width:266px;height:22px;background:#2b3240;border-radius:4px 0 0 0"></div>
<svg style="left:1660px;top:226px" width="4" height="10" viewBox="0 0 4 10" fill="#aab0ba"><rect x="0" y="0" width="1" height="1"/><rect x="2" y="0" width="1" height="1"/><rect x="0" y="2" width="1" height="1"/><rect x="2" y="2" width="1" height="1"/><rect x="0" y="4" width="1" height="1"/><rect x="2" y="4" width="1" height="1"/><rect x="0" y="6" width="1" height="1"/><rect x="2" y="6" width="1" height="1"/><rect x="0" y="8" width="1" height="1"/><rect x="2" y="8" width="1" height="1"/></svg>
<div class="t" style="left:1668px;top:225px;font-size:12px;color:#eef0f3">统计信息</div>
<div class="t" style="left:1779px;top:254px;font-size:14px;color:#a4abb6">参数管理</div>
<div class="a" style="left:1846px;top:246px;width:1px;height:30px;background:#4a5362"></div>
<div class="t" style="left:1859px;top:254px;font-size:14px;color:#a4abb6">云端上传</div>
<div class="a" style="left:1654px;top:278px;width:266px;height:36px;background:#2b3240"></div>
<div class="t" style="left:1688px;top:289px;font-size:14px;color:#fff;font-weight:500">信息面板</div>
<div class="a" style="left:1686px;top:312px;width:60px;height:2px;background:#f2f3f5"></div>
<div class="t" style="left:1808px;top:289px;font-size:14px;color:#fff;font-weight:500">操作日志</div>
<div class="t" style="left:1674px;top:337px;font-size:14px;color:#fff;font-weight:700">项目统计信息</div>
<div class="t" style="left:1875px;top:338px;font-size:12px;color:#fff;font-weight:700">刷新</div>
<div class="a" style="left:1654px;top:366px;width:266px;height:1px;background:#4e5767"></div>
<div class="a" style="left:1674px;top:389px;width:5px;height:2px;background:#fff"></div><div class="a" style="left:1681px;top:389px;width:5px;height:2px;background:#fff"></div>
<div class="t" style="left:1674px;top:411px;font-size:12px;color:#a4abb6">总面积(㎡)</div>
<div class="a" style="left:1800px;top:389px;width:5px;height:2px;background:#fff"></div><div class="a" style="left:1807px;top:389px;width:5px;height:2px;background:#fff"></div>
<div class="t" style="left:1800px;top:411px;font-size:12px;color:#a4abb6">装机容量(MW)</div>
<div class="a" style="left:1674px;top:455px;width:5px;height:2px;background:#fff"></div><div class="a" style="left:1681px;top:455px;width:5px;height:2px;background:#fff"></div>
<div class="t" style="left:1674px;top:477px;font-size:12px;color:#a4abb6">彩钢瓦屋面</div>
<div class="a" style="left:1800px;top:455px;width:5px;height:2px;background:#fff"></div><div class="a" style="left:1807px;top:455px;width:5px;height:2px;background:#fff"></div>
<div class="t" style="left:1800px;top:477px;font-size:12px;color:#a4abb6">水泥屋面</div>
<div class="a" style="left:1674px;top:520px;width:5px;height:2px;background:#fff"></div><div class="a" style="left:1681px;top:520px;width:5px;height:2px;background:#fff"></div>
<div class="t" style="left:1674px;top:542px;font-size:12px;color:#a4abb6">车棚</div>
<div class="a" style="left:1674px;top:586px;width:5px;height:2px;background:#fff"></div><div class="a" style="left:1681px;top:586px;width:5px;height:2px;background:#fff"></div>
<div class="t" style="left:1674px;top:608px;font-size:12px;color:#a4abb6">组件数(块)</div>
<div class="a" style="left:1800px;top:586px;width:5px;height:2px;background:#fff"></div><div class="a" style="left:1807px;top:586px;width:5px;height:2px;background:#fff"></div>
<div class="t" style="left:1800px;top:608px;font-size:12px;color:#a4abb6">高压接入柜</div>
<div class="a" style="left:1674px;top:651px;width:5px;height:2px;background:#fff"></div><div class="a" style="left:1681px;top:651px;width:5px;height:2px;background:#fff"></div>
<div class="t" style="left:1674px;top:673px;font-size:12px;color:#a4abb6">逆变器数(台)</div>
<div class="a" style="left:1654px;top:701px;width:266px;height:1px;background:#4e5767"></div>
<div class="t" style="left:1679px;top:717px;font-size:14px;color:#fff;font-weight:700">主体方案信息</div>
<div class="a" style="left:1654px;top:747px;width:266px;height:1px;background:#4e5767"></div>
<div class="a" style="left:1662px;top:759px;width:120px;height:28px;border-radius:6px;background:#2b3240"></div>
<div class="t" style="left:1662px;top:766px;width:120px;text-align:center;font-size:12.500px;color:#fff;font-weight:500">异常提示表</div>
<div class="a" style="left:1799px;top:759px;width:120px;height:28px;border-radius:6px;background:#2b3240"></div>
<div class="t" style="left:1799px;top:766px;width:120px;text-align:center;font-size:12.500px;color:#fff;font-weight:500">汇流信息表</div>
<div class="a" style="left:1654px;top:799px;width:266px;height:1px;background:#4e5767"></div>
<div class="t" style="left:1679px;top:815px;font-size:14px;color:#fff;font-weight:700">元素信息</div>
<div class="a" style="left:1654px;top:844px;width:266px;height:1px;background:#4e5767"></div>
<div class="a" style="left:1654px;top:946px;width:266px;height:1px;background:#414a59"></div>
<div class="a" style="left:1654px;top:984px;width:266px;height:1px;background:#333b48"></div>
<!-- command line -->
<div class="a" style="left:326px;top:961px;width:60px;height:26px;border-radius:4px 0 0 4px;background:#2b313d"></div>
<div class="a" style="left:381px;top:962px;width:1277px;height:25px;border-radius:3px;background:#bcbcbe"></div>
<svg style="left:328px;top:964px" width="54" height="20" viewBox="0 0 54 20">
<g fill="#c5c7cb"><rect x="1" y="1" width="1.600" height="1.600"/><rect x="4" y="1" width="1.600" height="1.600"/><rect x="1" y="4" width="1.600" height="1.600"/><rect x="4" y="4" width="1.600" height="1.600"/><rect x="1" y="7" width="1.600" height="1.600"/><rect x="4" y="7" width="1.600" height="1.600"/><rect x="1" y="10" width="1.600" height="1.600"/><rect x="4" y="10" width="1.600" height="1.600"/><rect x="1" y="13" width="1.600" height="1.600"/><rect x="4" y="13" width="1.600" height="1.600"/><rect x="1" y="16" width="1.600" height="1.600"/><rect x="4" y="16" width="1.600" height="1.600"/></g>
<path d="M12 5l8 8M20 5l-8 8" stroke="#b8babe" stroke-width="1.800"/>
<path d="M33.500 17.500l7-7.500c-1-3 1-6 5-6l-2.500 3 2.500 2.500 3-2.500c0 4-3 6-6 5l-7 7.500z" fill="#b8babe"/>
</svg>
<svg style="left:385px;top:968px" width="30" height="14" viewBox="0 0 30 14"><rect x=".6" y=".6" width="15" height="11.800" fill="#d6d6d8" stroke="#555" stroke-width="1.200"/><rect x=".6" y=".6" width="15" height="2.400" fill="#555"/><path d="M3 5.500l2.500 1.800L3 9M7 10h3.500" fill="none" stroke="#555" stroke-width="1"/><path d="M19 5.500h7l-3.500 3.800z" fill="#555"/></svg>
<div class="t" style="left:412px;top:971px;font-family:'Liberation Mono',monospace;font-size:11.600px;color:#1c1c1c">JSWMSB</div>
<svg style="left:1646px;top:971px" width="8" height="6" viewBox="0 0 8 6"><path d="M.5 5L4 1l3.500 4z" fill="#555"/></svg>
<!-- UCS -->
<svg style="left:340px;top:895px" width="90" height="85" viewBox="0 0 90 85" fill="none" stroke="#f4f4f4" stroke-width="1">
<path d="M15 6l6.500 7.500L28 6M21.500 13.500v6.500"/><path d="M13.500 24v45"/><rect x="9.500" y="68.500" width="9" height="9" stroke="#a9abb0"/><path d="M13.500 73.500h50"/><path d="M68 59l13 13M81 59L68 72"/>
</svg>
<!--BOTTOM-->
<div class="a" style="left:59px;top:983px;width:275px;height:5px;background:#3b4453"></div>
<div class="a" style="left:59px;top:988px;width:1861px;height:39px;background:#222933"></div>
<div class="a" style="left:334px;top:987px;width:1318px;height:1px;background:#39414e"></div>
<svg style="left:59px;top:988px" width="200" height="20" viewBox="0 0 200 20">
<path d="M4 0c5 0 6 2 8 7l2.500 7c1.500 4 3 5 7 5h23c4 0 5.500-1 7-5l2.500-7c2-5 3-7 8-7z" fill="#3b4453"/>
<path d="M56 4l3 9c1.500 4 3 5 7 5h36c4 0 5.500-1 7-5l3-9c1-3 0-4-2-4H58c-2 0-3 1-2 4z" fill="#2c3440"/>
<path d="M110 4l3 9c1.500 4 3 5 7 5h36c4 0 5.500-1 7-5l3-9c1-3 0-4-2-4h-52c-2 0-3 1-2 4z" fill="#2c3440"/>
<path d="M171 16c5 0 6-3 7.500-7l1.500-5c1-3 3-4 6-4h5c3 0 3.500 1.500 2.500 4.500l-2 6c-1.500 4-3.500 5.500-7.500 5.500z" fill="#2c3440"/>
<path d="M182 5v8M178 9h8" stroke="#b6bbc3" stroke-width="1.700"/>
<path d="M62.500 1v16M102.500 1v16M116.500 1v16M156.500 1v16" stroke="#343c49" stroke-width="1"/>
</svg>
<div class="t" style="left:82px;top:992px;font-size:12px;color:#fff;font-weight:500">模型</div>
<div class="t" style="left:129px;top:992px;font-size:12px;color:#c3c8cf">布局1</div>
<div class="t" style="left:183px;top:992px;font-size:12px;color:#c3c8cf">布局2</div>
<!--STATUS-->
<div class="a sb" style="left:1385px;width:27px"></div>
<div class="a sb" style="left:1415px;width:63px"></div>
<div class="a sb" style="left:1481px;width:102px"></div>
<div class="a sb" style="left:1585px;width:22px;background:#5b8fc6"></div>
<div class="a sb" style="left:1609px;width:22px;background:#5b8fc6"></div>
<div class="a sb" style="left:1631px;width:17px"></div>
<div class="a sb" style="left:1651px;width:22px;background:#5b8fc6"></div>
<div class="a sb" style="left:1673px;width:82px"></div>
<div class="a sb" style="left:1758px;width:39px"></div>
<div class="a sb" style="left:1798px;width:24px"></div>
<div class="a sb" style="left:1825px;width:95px"></div>
<div class="t" style="left:1388px;top:1017px;font-size:12px;color:#f2f3f5">模型</div>
<svg style="left:1415px;top:1010px" width="505" height="17" viewBox="0 0 505 17" fill="none" stroke="#e4e6ea" stroke-width="1.200">
<path d="M4 8.500h15M4 12.500h15M4 16.500h15M8 5v12M12 5v12M16 5v12"/>
<g fill="#e4e6ea" stroke="none"><rect x="29" y="6" width="2" height="2"/><rect x="35" y="6" width="2" height="2"/><rect x="41" y="6" width="2" height="2"/><rect x="29" y="11" width="2" height="2"/><rect x="35" y="11" width="2" height="2"/><rect x="41" y="11" width="2" height="2"/><rect x="29" y="16" width="2" height="2"/><rect x="35" y="16" width="2" height="2"/><rect x="41" y="16" width="2" height="2"/>
<path d="M52 10.500h7l-3.500 3.800z"/><path d="M118 10.500h7l-3.500 3.800z"/><path d="M157 10.500h7l-3.500 3.800z"/><path d="M221 10.500h7l-3.500 3.800z"/><path d="M329 10.500h7l-3.500 3.800z"/><path d="M370 10.500h7l-3.500 3.800z"/></g>
<path d="M71.500 4v13M71.500 15.500h5v2" stroke-width="1.400"/>
<circle cx="102" cy="12.500" r="6.500"/><path d="M98 17l9-12M101 12.500h9"/>
<path d="M133 4l12 14" stroke="#e05050"/><path d="M139.500 3v14" stroke="#3fd06a"/><circle cx="139.500" cy="11.500" r="1.500" stroke="#fff" fill="#3b4453"/>
<path d="M173 17l11-11" stroke="#fff" stroke-width="1.400"/><rect x="177" y="10" width="3" height="3" fill="#fff" stroke="none"/>
<path d="M201 17V8h11v9" stroke="#fff" stroke-width="1.400"/><rect x="198.500" y="4.500" width="4" height="4" stroke="#fff" fill="#5b8fc6"/>
<path d="M247 4l-5 13h3.500l1.500-4 1.500 4h3.500z" fill="#fff" stroke="none"/><circle cx="255" cy="6.500" r="2.300" stroke="#fff"/>
<path d="M272 5l-4.500 12h3l1.500-4 1.500 4h3z" fill="#d8dade" stroke="none"/><path d="M279 4l-2.500 3.500h2l-1 3 3-4h-2z" fill="#d8dade" stroke="none"/>
<path d="M296 5l-4.500 12h3l1.500-4 1.500 4h3z" fill="#d8dade" stroke="none"/>
<circle cx="354" cy="12" r="4.200" stroke-width="3.200"/><path d="M354 4v4M354 16v4M346 12h4M358 12h4M348.300 6.300l2.900 2.900M356.800 14.800l2.900 2.900M348.300 17.700l2.900-2.900M356.800 9.200l2.900-2.900" stroke-width="2.800"/>
<path d="M394.500 5v12M386 13.500h17" stroke-width="1.600"/>
<rect x="414.500" y="4.500" width="5.500" height="5.500"/><circle cx="427" cy="10.500" r="3"/><path d="M416 17.500l3-4 3 4" />
<path d="M490 6.500h15M490 11.500h15" stroke="#fff" stroke-width="1.600"/>
</svg>
<div class="t" style="left:1727px;top:1017px;font-size:12px;font-weight:700;color:#f2f3f5;letter-spacing:-.6px">1:1</div>
<!-- tiger mascot -->
<svg style="left:1838px;top:905px" width="82" height="122" viewBox="0 0 82 122">
<g stroke="#1a1208" stroke-width="2.200" fill="#f6a623" stroke-linejoin="round">
<path d="M31 80c0 0-1 0 0 0" />
<path d="M16.500 126v-6.500c0-2 9-4 23-4s23 2 23 4V126z" fill="#e2595c"/>
<path d="M33 82c10-3 14 1 4 4s-10 4 2 4 12 2 0 4-12 4 2 4 10 3-1 4-8 3 3 4 8 3-2 4" fill="none" stroke-width="1.800"/>
<ellipse cx="39.500" cy="72.500" rx="35" ry="10.500"/>
<circle cx="13" cy="14" r="7"/><circle cx="57" cy="12" r="7"/>
<ellipse cx="37.500" cy="31.500" rx="30" ry="25.500"/>
<ellipse cx="37" cy="59" rx="22" ry="14"/>
</g>
<ellipse cx="39.500" cy="72.500" rx="33.500" ry="9" fill="#f6a623"/>
<ellipse cx="37" cy="58" rx="21" ry="13" fill="#f6a623"/>
<circle cx="13" cy="15" r="3.200" fill="#dc8f17"/><circle cx="58" cy="13" r="3.200" fill="#dc8f17"/>
<circle cx="13" cy="73" r="3" fill="#dc8f17"/><circle cx="65" cy="73" r="3" fill="#dc8f17"/>
<path d="M30 8.500h14M31 13h12M29 18h16M37 8.500v9.500" stroke="#1a1208" stroke-width="2.200" fill="none"/>
<path d="M8.500 27l8 1.500M8 34l9 .5M9 41l8-1M66.500 25l-8 2M67.500 32l-9 1M67 39.500l-8-1" stroke="#1a1208" stroke-width="2.400" stroke-linecap="round" fill="none"/>
<ellipse cx="38.500" cy="39" rx="12" ry="8" fill="#fff"/>
<circle cx="28" cy="31" r="2" fill="#1a1208"/><circle cx="48" cy="31" r="2" fill="#1a1208"/>
<path d="M36 35h5l-2.500 3z" fill="#1a1208" stroke="#1a1208" stroke-width="1" stroke-linejoin="round"/><path d="M34.500 40c1.500 2 3.500 1.500 4-1 .5 2.500 2.500 3 4 1" stroke="#1a1208" stroke-width="1.300" fill="none" stroke-linecap="round"/>
<g stroke="#1a1208" stroke-width="2" fill="#f6a623"><ellipse cx="20" cy="55" rx="8.500" ry="9.500"/><ellipse cx="55" cy="55" rx="8.500" ry="9.500"/></g>
<path d="M38 51c3-5 11-3 9 4-1.500 6-6 9-9 10.500-3.500-1.500-8-4.500-9.500-10.500-1.500-7 6.500-9 9.500-4z" fill="#f0835c" stroke="#1a1208" stroke-width="1.600"/>
<path d="M53.500 104.500l6-3.500c1.500 1.800 4.500 1.800 6 0l6 3.500-2.300 4.200-2.400-1v6.300h-8.600v-6.300l-2.400 1z" fill="#f6a623" stroke="#1a1208" stroke-width="1.400" stroke-linejoin="round"/><path d="M25 109l4 2.500-4 2.500z" fill="#4f8fd6"/>
</svg>
<div class="t" style="left:1848px;top:1006px;font-size:14px;font-weight:900;color:#fff;-webkit-text-stroke:3px #111;paint-order:stroke fill">英</div>
<div class="t" style="left:1848px;top:1006px;font-size:14px;font-weight:900;color:#fff">英</div>
</body>
</html>
